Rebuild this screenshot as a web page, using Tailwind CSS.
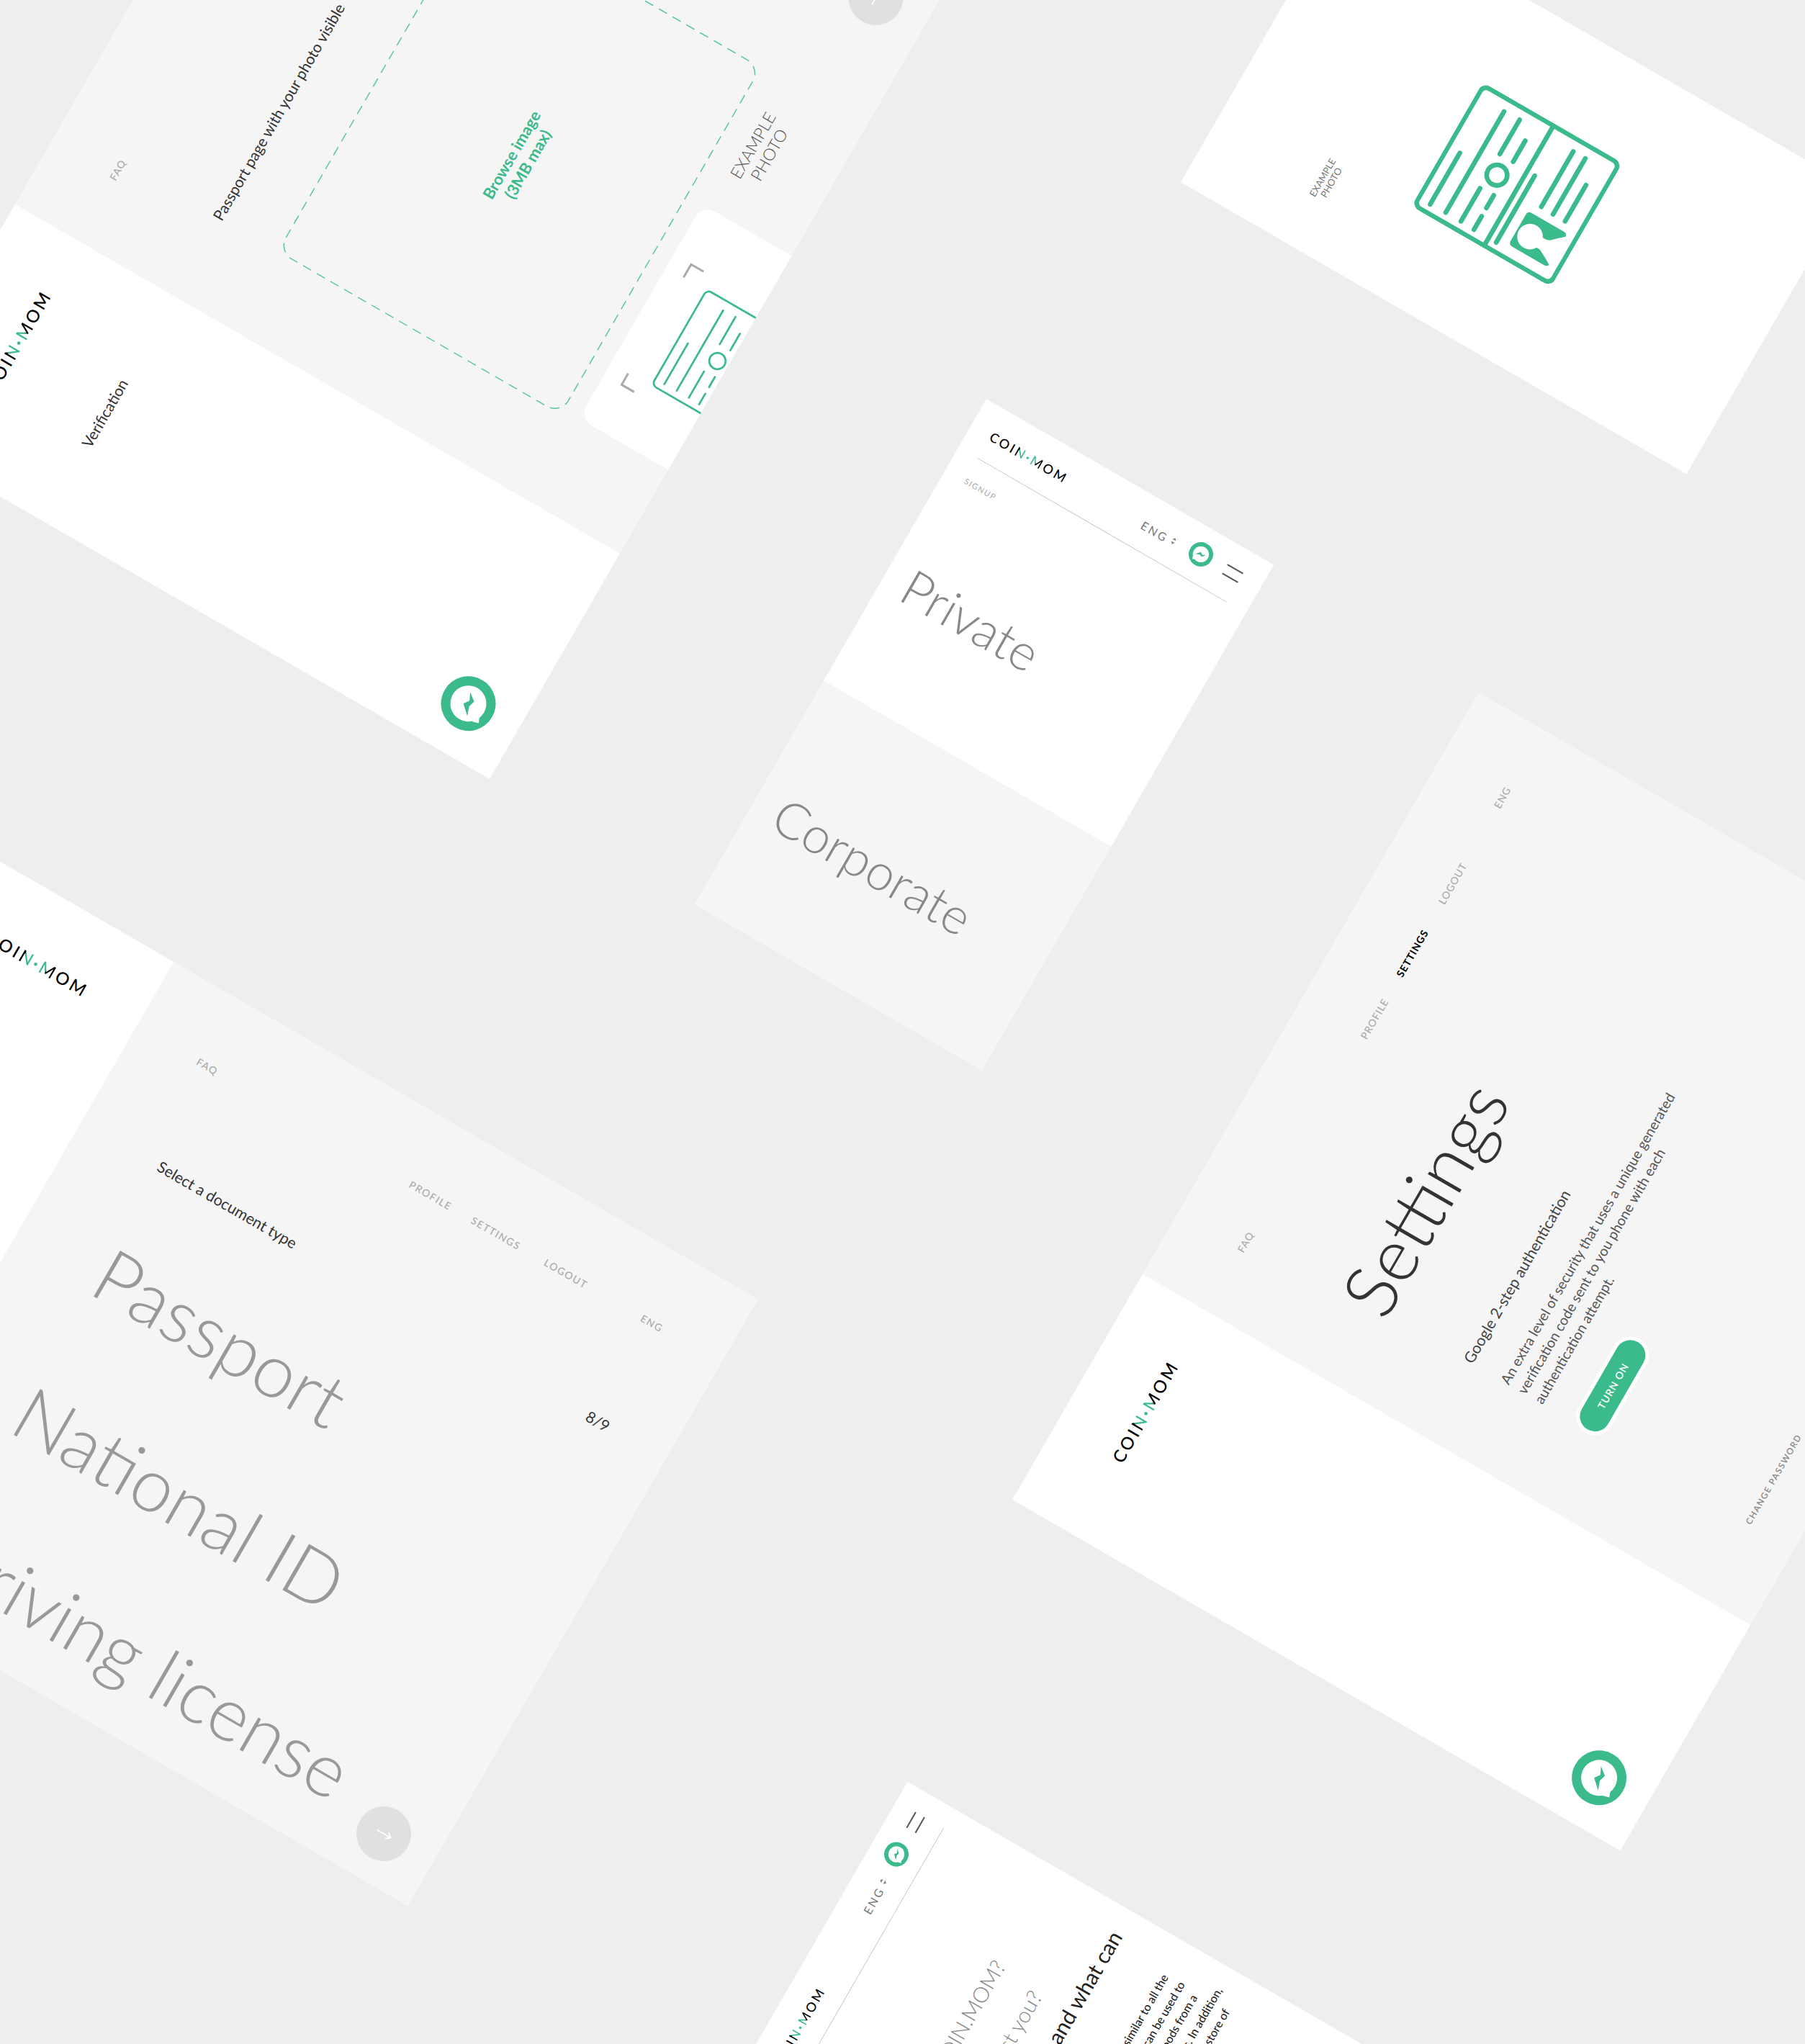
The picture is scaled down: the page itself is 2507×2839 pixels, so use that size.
<!DOCTYPE html>
<html lang="en">
<head>
<meta charset="UTF-8">
<title>Coin.Mom screens</title>
<script src="https://cdn.jsdelivr.net/npm/@tailwindcss/browser@4"></script>
</head>
<body class="[font-family:Lato,sans-serif]">

<svg class="absolute size-0">
  <symbol id="chat" viewBox="-38 -38 76 76">
    <circle r="38" fill="#3bba8b"/>
    <circle r="25" fill="#fff"/>
    <polygon points="-19,17 -16.5,26 -6.4,22" fill="#fff"/>
    <polygon points="15.2,-5.7 6.3,5.6 -3,2.9 -15.7,7.5 -3.5,-6 4.3,-0.6" fill="#3bba8b"/>
  </symbol>
  <symbol id="doc" viewBox="-3 -3 195 220">
    <g fill="none" stroke="#3bba8b" stroke-linecap="round">
      <rect x="0" y="0" width="189" height="214" rx="9"/>
      <path d="M0 110H189"/>
      <path d="M12 18H93M13 42H172M13 66H65M119 66H173M12 87H33M46 87H66M119 87H152"/>
      <circle cx="92" cy="77" r="14"/>
      <path d="M12 122H117M85 151H172M84 170H172M84 189H141"/>
    </g>
    <rect x="18" y="138" width="53" height="62" rx="5" fill="#3bba8b"/>
    <circle cx="42" cy="158" r="17.500" fill="#fff"/>
    <path d="M33 170Q35 178 31 183Q26 193 21 201H67Q60 193 52 185Q48 180 50 170Z" fill="#fff"/>
  </symbol>
  <symbol id="arrow" viewBox="0 0 24 12">
    <path d="M1 6H23M17 1L23 6L17 11" fill="none" stroke="#fff" stroke-width="1.800"/>
  </symbol>
</svg>

<div class="relative w-[2507px] h-[2839px] overflow-hidden bg-[#eeeeee]">

  <!-- verification screen, top left -->
  <div class="absolute left-[-160px] top-[597px] origin-top-left rotate-[-60deg] flex w-[1299px] h-[970px]">
    <div class="relative w-[362px] bg-white pl-[120px] pt-[85px]">
      <div class="flex text-[24px] leading-[28px] font-medium tracking-[3.500px] text-black">COI<span class="bg-linear-to-r from-black from-25% to-[#3bba8b] to-25% bg-clip-text text-transparent">N</span><span class="font-bold text-[#3bba8b]">·</span><span class="bg-linear-to-r from-[#3bba8b] from-40% to-black to-40% bg-clip-text text-transparent">M</span>OM</div>
      <div class="mt-[125px] text-[21px] leading-[30px] text-[#333]">Verification</div>
      <svg class="absolute left-[38px] top-[854px] size-[76px]"><use href="#chat"/></svg>
    </div>
    <div class="relative flex-1 bg-[#f5f5f5] pl-[122px] pt-[90px]">
      <div class="h-[20px] -ml-[25px] text-[14px] leading-[20px] font-medium tracking-[1px] text-[#aaa]">FAQ</div>
      <div class="mt-[128px] text-[21px] leading-[30px] text-[#333]">Passport page with your photo visible</div>
      <div class="relative mt-[80px] ml-[3px] w-[558px] h-[455px]">
        <svg class="absolute inset-0 size-full" viewBox="0 0 558 455"><rect x="1" y="1" width="556" height="453" rx="22" fill="none" stroke="#5cc6a0" stroke-width="1.600" stroke-dasharray="13 9"/></svg>
        <div class="flex h-full flex-col items-center justify-center text-[22px] leading-[26px] font-bold text-[#3bba8b]"><span>Browse image</span><span>(3MB max)</span></div>
      </div>
      <div class="mt-[24px] flex">
        <div class="relative ml-[12px] h-[143px] w-[343px] overflow-hidden rounded-t-[20px] bg-white pl-[88px] pt-[62px]">
          <svg class="absolute inset-0 size-full" viewBox="0 0 343 143"><path d="M242 28H263V48M88 28H70V48" fill="none" stroke="#aaa" stroke-width="3"/></svg>
          <svg class="h-[178px] w-[158px] [stroke-width:3.400]"><use href="#doc"/></svg>
        </div>
        <div class="mt-[6px] ml-[55px] text-center text-[23px] leading-[26px] font-light text-[#555]">EXAMPLE<br>PHOTO</div>
      </div>
      <div class="absolute left-[808px] top-[854px] flex size-[76px] items-center justify-center rounded-full bg-[#e0e0e0]"><svg class="h-[12px] w-[24px]"><use href="#arrow"/></svg></div>
    </div>
  </div>

  <!-- example photo screen, top right -->
  <div class="absolute left-[1640px] top-[253px] origin-top-left rotate-[-60deg] flex w-[461px] h-[811px] flex-col bg-white pt-[160px]">
    <div class="ml-[64px] w-[80px] text-center text-[13px] leading-[14px] text-[#777]">EXAMPLE<br>PHOTO</div>
    <svg class="mt-[106px] ml-[131px] h-[224px] w-[199px] [stroke-width:6.500]"><use href="#doc"/></svg>
  </div>

  <!-- account type, phone -->
  <div class="absolute left-[1370px] top-[554px] origin-top-left rotate-[30deg] flex w-[461px] h-[811px] flex-col">
    <div class="h-[452px] bg-white px-[31px]">
      <div class="flex h-[78px] items-center justify-between border-b border-[#ccc] pt-[4px]">
        <div class="flex text-[18px] leading-[20px] font-medium tracking-[3px] text-black">COI<span class="bg-linear-to-r from-black from-25% to-[#3bba8b] to-25% bg-clip-text text-transparent">N</span><span class="font-bold text-[#3bba8b]">·</span><span class="bg-linear-to-r from-[#3bba8b] from-40% to-black to-40% bg-clip-text text-transparent">M</span>OM</div>
        <div class="flex items-center -mt-[5px]">
          <span class="mt-[10px] text-[16px] tracking-[2.500px] text-[#777]">ENG</span>
          <svg class="mt-[6px] ml-[6px] h-[10px] w-[6px]" viewBox="0 0 6 10"><path d="M3 0L6 3.500H0ZM3 10L0 6.500H6Z" fill="#888"/></svg>
          <svg class="ml-[22px] size-[34px]"><use href="#chat"/></svg>
          <div class="mt-[2px] ml-[22px] flex w-[25px] flex-col gap-[12px]"><div class="h-[2px] bg-[#555]"></div><div class="h-[2px] bg-[#555]"></div></div>
        </div>
      </div>
      <div class="mt-[27px] text-[11px] leading-[16px] tracking-[1.500px] text-[#aaa]">SIGNUP</div>
      <div class="mt-[115px] text-[70px] leading-[80px] font-light text-[#888]">Private</div>
    </div>
    <div class="flex-1 bg-[#f5f5f5] pl-[35px] pt-[148px]">
      <div class="text-[70px] leading-[80px] font-light text-[#888]">Corporate</div>
    </div>
  </div>

  <!-- select a document, desktop -->
  <div class="absolute left-[-72px] top-[1155px] origin-top-left rotate-[30deg] flex w-[1299px] h-[973px]">
    <div class="w-[362px] bg-white pl-[120px] pt-[83px]">
      <div class="flex text-[24px] leading-[28px] font-medium tracking-[3.500px] text-black">COI<span class="bg-linear-to-r from-black from-25% to-[#3bba8b] to-25% bg-clip-text text-transparent">N</span><span class="font-bold text-[#3bba8b]">·</span><span class="bg-linear-to-r from-[#3bba8b] from-40% to-black to-40% bg-clip-text text-transparent">M</span>OM</div>
    </div>
    <div class="relative flex-1 bg-[#f5f5f5] pt-[93px]">
      <div class="flex h-[20px] pl-[88px] text-center text-[14px] leading-[20px] font-medium tracking-[1.500px] text-[#aaa]">
        <span class="w-[50px]">FAQ</span>
        <span class="ml-[283px] w-[100px]">PROFILE</span>
        <span class="ml-[5px] w-[100px]">SETTINGS</span>
        <span class="ml-[12px] w-[100px]">LOGOUT</span>
        <span class="ml-[38px] w-[100px]">ENG</span>
      </div>
      <div class="mt-[127px] flex justify-between pl-[123px] pr-[58px] text-[21.300px] leading-[30px] text-[#333]">
        <span>Select a document type</span>
        <span class="mt-[3px] w-[100px] text-center">8/9</span>
      </div>
      <div class="mt-[34px] pl-[125px] text-[104px] leading-[222px] font-light text-[#999]">
        <div>Passport</div>
        <div>National ID</div>
        <div class="tracking-[-0.600px]">Driving license</div>
      </div>
      <div class="absolute left-[820px] top-[865px] flex size-[76px] items-center justify-center rounded-full bg-[#e0e0e0]"><svg class="h-[12px] w-[24px]"><use href="#arrow"/></svg></div>
    </div>
  </div>

  <!-- settings, desktop -->
  <div class="absolute left-[1406px] top-[2083px] origin-top-left rotate-[-60deg] flex w-[1295px] h-[975px]">
    <div class="relative w-[362px] bg-white pl-[119px] pt-[85px]">
      <div class="flex text-[24px] leading-[28px] font-medium tracking-[3.500px] text-black">COI<span class="bg-linear-to-r from-black from-25% to-[#3bba8b] to-25% bg-clip-text text-transparent">N</span><span class="font-bold text-[#3bba8b]">·</span><span class="bg-linear-to-r from-[#3bba8b] from-40% to-black to-40% bg-clip-text text-transparent">M</span>OM</div>
      <svg class="absolute left-[35px] top-[861px] size-[76px]"><use href="#chat"/></svg>
    </div>
    <div class="flex-1 bg-[#f5f5f5] pt-[92px]">
      <div class="flex h-[20px] pl-[85px] text-center text-[14px] leading-[20px] font-medium tracking-[1px] text-[#aaa]">
        <span class="w-[50px]">FAQ</span>
        <span class="ml-[283px] w-[100px]">PROFILE</span>
        <span class="ml-[5px] w-[100px] font-bold text-black">SETTINGS</span>
        <span class="ml-[12px] w-[100px]">LOGOUT</span>
        <span class="ml-[38px] w-[100px]">ENG</span>
      </div>
      <div class="pl-[120px]">
        <div class="mt-[123px] -ml-[10px] text-[103px] leading-[100px] font-light text-[#333]">Settings</div>
        <div class="mt-[102px] text-[21.300px] leading-[30px] text-[#444]">Google 2-step authentication</div>
        <div class="mt-[30px] w-[510px] text-[19.500px] leading-[27px] text-[#555]">An extra level of security that uses a unique generated<br>verification code sent to you phone with each<br>authentication attempt.</div>
        <div class="mt-[39px] -ml-[3px] flex h-[52px] w-[150px] items-center justify-center rounded-full border-[5px] border-white bg-[#3bba8b] text-[14px] font-semibold tracking-[1px] text-white">TURN ON</div>
        <div class="mt-[223px] text-[12px] leading-[20px] font-semibold tracking-[1.500px] text-[#888]">CHANGE PASSWORD</div>
      </div>
    </div>
  </div>

  <!-- faq, phone -->
  <div class="absolute left-[1030px] top-[2874px] origin-top-left rotate-[-60deg] w-[461px] h-[811px] bg-white">
    <div class="mx-[31px] flex h-[76px] items-center justify-between border-b border-[#ccc] pt-[4px]">
      <div class="flex text-[18px] leading-[20px] font-medium tracking-[3px] text-black">COI<span class="bg-linear-to-r from-black from-25% to-[#3bba8b] to-25% bg-clip-text text-transparent">N</span><span class="font-bold text-[#3bba8b]">·</span><span class="bg-linear-to-r from-[#3bba8b] from-40% to-black to-40% bg-clip-text text-transparent">M</span>OM</div>
      <div class="flex items-center -mt-[5px]">
        <span class="mt-[10px] text-[16px] tracking-[2.500px] text-[#777]">ENG</span>
        <svg class="mt-[6px] ml-[6px] h-[10px] w-[6px]" viewBox="0 0 6 10"><path d="M3 0L6 3.500H0ZM3 10L0 6.500H6Z" fill="#888"/></svg>
        <svg class="ml-[22px] size-[34px]"><use href="#chat"/></svg>
        <div class="mt-[2px] ml-[22px] flex w-[25px] flex-col gap-[12px]"><div class="h-[2px] bg-[#555]"></div><div class="h-[2px] bg-[#555]"></div></div>
      </div>
    </div>
    <div class="mt-[129px] text-[30px] leading-[60px] font-light text-[#888]">
      <div class="w-[308px] text-right">What is COIN.MOM?</div>
      <div class="mt-[5px] w-[297px] text-right">Does it impact you?</div>
    </div>
    <div class="w-[424px] -mt-[5px] text-right text-[30px] leading-[60px] text-[#222]">What are bitcoins and what can</div>
    <div class="mt-[47px] text-right text-[16px] leading-[24.500px] font-medium text-[#222]">
      <div class="pr-[54px]">Bitcoins are very similar to all the</div>
      <div class="pr-[51px]">money, they can be used to</div>
      <div class="pr-[58px]">buy goods from a</div>
      <div class="pr-[32px]">range of services. In addition,</div>
      <div class="pr-[53px]">they are a store of</div>
    </div>
  </div>

</div>
</body>
</html>
